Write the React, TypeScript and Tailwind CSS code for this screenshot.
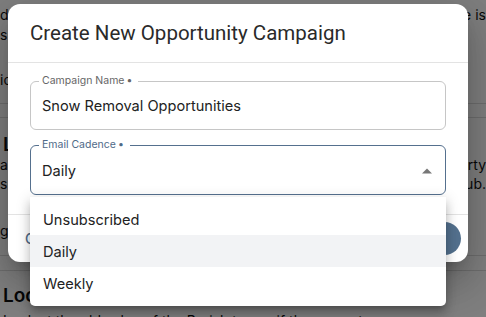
import React from "react";

const bodyFont = { fontFamily: "Inter, 'Noto Sans', sans-serif" };

function Row({ left, right, className }: { left: string; right?: string; className?: string }) {
  return (
    <div className={"flex justify-between items-center whitespace-nowrap overflow-hidden " + (className ?? "")}>
      <span>{left}</span>
      {right ? <span>{right}</span> : null}
    </div>
  );
}

export default function App() {
  return (
    <div className="relative w-[486px] h-[317px] overflow-hidden bg-white text-[#111]" style={bodyFont}>
      {/* underlying page */}
      <div className="flex flex-col text-[14px] leading-[20px]">
        <Row left="de" right="e is" className="h-[20px] mt-[5px]" />
        <Row left="s," className="h-[20px]" />
        <Row left="ic" className="h-[20px] mt-[25px]" />
        <div className="h-px bg-[#dcdcdc] mt-[13px]" />
        <div className="h-px bg-[#dcdcdc] mt-[13px]" />
        <div className="h-[24px] mt-[15px] pl-[3px] text-[19px] font-semibold leading-[24px]">L</div>
        <Row left="ai" right="erty" className="h-[20px] mt-[-2px]" />
        <Row left="s" right="ub." className="h-[18px]" />
        <Row left="g" className="h-[20px] mt-[28px]" />
        <div className="h-px bg-[#dcdcdc] mt-[14px]" />
        <div className="h-px bg-[#dcdcdc] mt-[14px]" />
        <div className="h-[24px] mt-[13px] pl-[3px] text-[19px] font-semibold leading-[24px] whitespace-nowrap">Locations</div>
        <div className="pl-[3px] mt-[3px] whitespace-nowrap">Look at the old value of the Parish to see if the property</div>
      </div>

      {/* overlay */}
      <div className="absolute inset-0 bg-black/50" />

      {/* dialog */}
      <div className="absolute left-[8px] top-[4px] w-[460px] h-[258px] bg-white rounded-[12px] shadow-[0_11px_15px_-7px_rgba(0,0,0,0.2),0_24px_38px_3px_rgba(0,0,0,0.14),0_9px_46px_8px_rgba(0,0,0,0.12)] flex flex-col overflow-hidden">
        <div className="px-[22px] pt-[16px] pb-[16px] border-b border-[#e3e3e3]">
          <h2 className="text-[20.5px] leading-[26px] text-[#2a2a2a]" style={{ fontFamily: "Roboto, sans-serif" }}>
            Create New Opportunity Campaign
          </h2>
        </div>
        <div className="px-[22px] pt-[18px] pb-[19px] flex flex-col gap-[15px] border-b border-[#e3e3e3]">
          <div className="relative h-[49px] rounded-[6px] border border-[#c6c6c6] flex items-center px-[11px]">
            <span className="absolute left-[8px] -top-[8px] bg-white pl-[3px] pr-[6px] text-[10.5px] leading-[14px] text-[#666]">
              Campaign Name<span className="ml-[2px]">•</span>
            </span>
            <span className="text-[14.6px] text-[#222] mt-[3px]">Snow Removal Opportunities</span>
          </div>
          <div className="relative h-[50px] rounded-[6px] border border-[#55708e] flex items-center px-[11px]">
            <span className="absolute left-[8px] -top-[8px] bg-white pl-[3px] pr-[6px] text-[10.5px] leading-[14px] text-[#4f6a88]">
              Email Cadence<span className="ml-[2px]">•</span>
            </span>
            <span className="text-[14.6px] text-[#222] flex-1 mt-[3px]">Daily</span>
            <svg width="10" height="6" viewBox="0 0 10 6" className="mr-[2px] mt-[1px]">
              <path d="M0 5.5 L5 0.5 L10 5.5 Z" fill="#777" />
            </svg>
          </div>
        </div>
        <div className="flex-1 flex items-center justify-between pl-[17px] pr-[7px]">
          <span className="text-[14px] text-[#4f6a88] font-medium">Cancel</span>
          <div className="h-[33px] w-[90px] rounded-full bg-[#53708d] text-white text-[14px] flex items-center justify-center">
            Create
          </div>
        </div>
      </div>

      {/* select menu */}
      <div className="absolute left-[30px] top-[197px] w-[416px] bg-white rounded-b-[5px] pt-[6px] pb-[7px] shadow-[0_5px_5px_-3px_rgba(0,0,0,0.2),0_8px_10px_1px_rgba(0,0,0,0.14),0_3px_14px_2px_rgba(0,0,0,0.12)] text-[14.6px] text-[#222]">
        <div className="h-[32px] flex items-center px-[13px] pt-[3px]">Unsubscribed</div>
        <div className="h-[32px] flex items-center px-[13px] pt-[3px] bg-[#f2f3f5]">Daily</div>
        <div className="h-[32px] flex items-center px-[13px] pt-[3px]">Weekly</div>
      </div>
    </div>
  );
}
